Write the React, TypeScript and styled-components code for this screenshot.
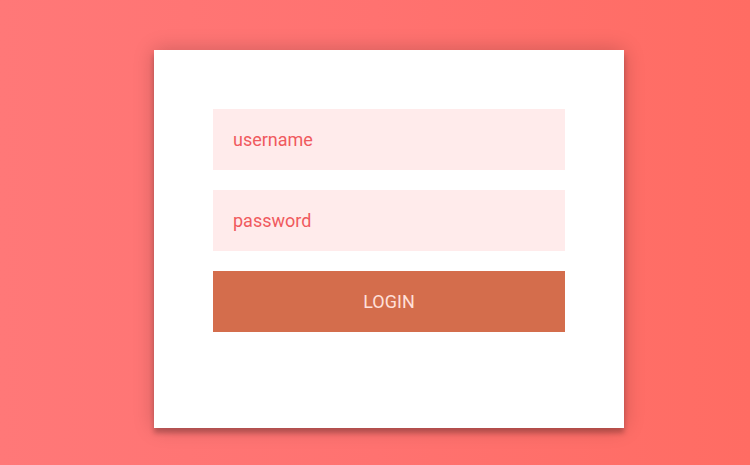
import React from "react";
import styled, { createGlobalStyle } from "styled-components";

const Global = createGlobalStyle`
  html, body { margin: 0; padding: 0; }
  body {
    font-family: Roboto, "Liberation Sans", sans-serif;
    background: linear-gradient(90deg, #ff7878 0%, #ff7270 50%, #ff6c63 100%);
    min-height: 465px;
  }
  * { box-sizing: border-box; }
`;

const Page = styled.div`
  width: 750px;
  height: 465px;
  padding: 50px 0 0 154px;
`;

const Card = styled.form`
  width: 470px;
  height: 378px;
  background: #ffffff;
  padding: 59px 59px 0 59px;
  display: flex;
  flex-direction: column;
  gap: 20px;
  box-shadow: 0 0 20px 0 rgba(0, 0, 0, 0.2), 0 5px 5px 0 rgba(0, 0, 0, 0.24);
`;

const Field = styled.input`
  width: 352px;
  height: 61px;
  border: none;
  outline: none;
  margin: 0;
  background: #ffebeb;
  padding: 0 20px;
  font-family: Roboto, "Liberation Sans", sans-serif;
  font-size: 18px;
  font-weight: 400;
  color: #f05a5e;
  &::placeholder { color: #f05a5e; opacity: 1; }
`;

const Button = styled.button`
  width: 352px;
  height: 61px;
  border: none;
  margin: 0;
  background: #d46d4c;
  color: #ffe0da;
  font-family: Roboto, "Liberation Sans", sans-serif;
  font-size: 18px;
  font-weight: 400;
  text-transform: uppercase;
  cursor: pointer;
`;

export default function App() {
  return (
    <>
      <Global />
      <Page>
        <Card onSubmit={(e) => e.preventDefault()}>
          <Field type="text" placeholder="username" />
          <Field type="password" placeholder="password" />
          <Button type="submit">login</Button>
        </Card>
      </Page>
    </>
  );
}
